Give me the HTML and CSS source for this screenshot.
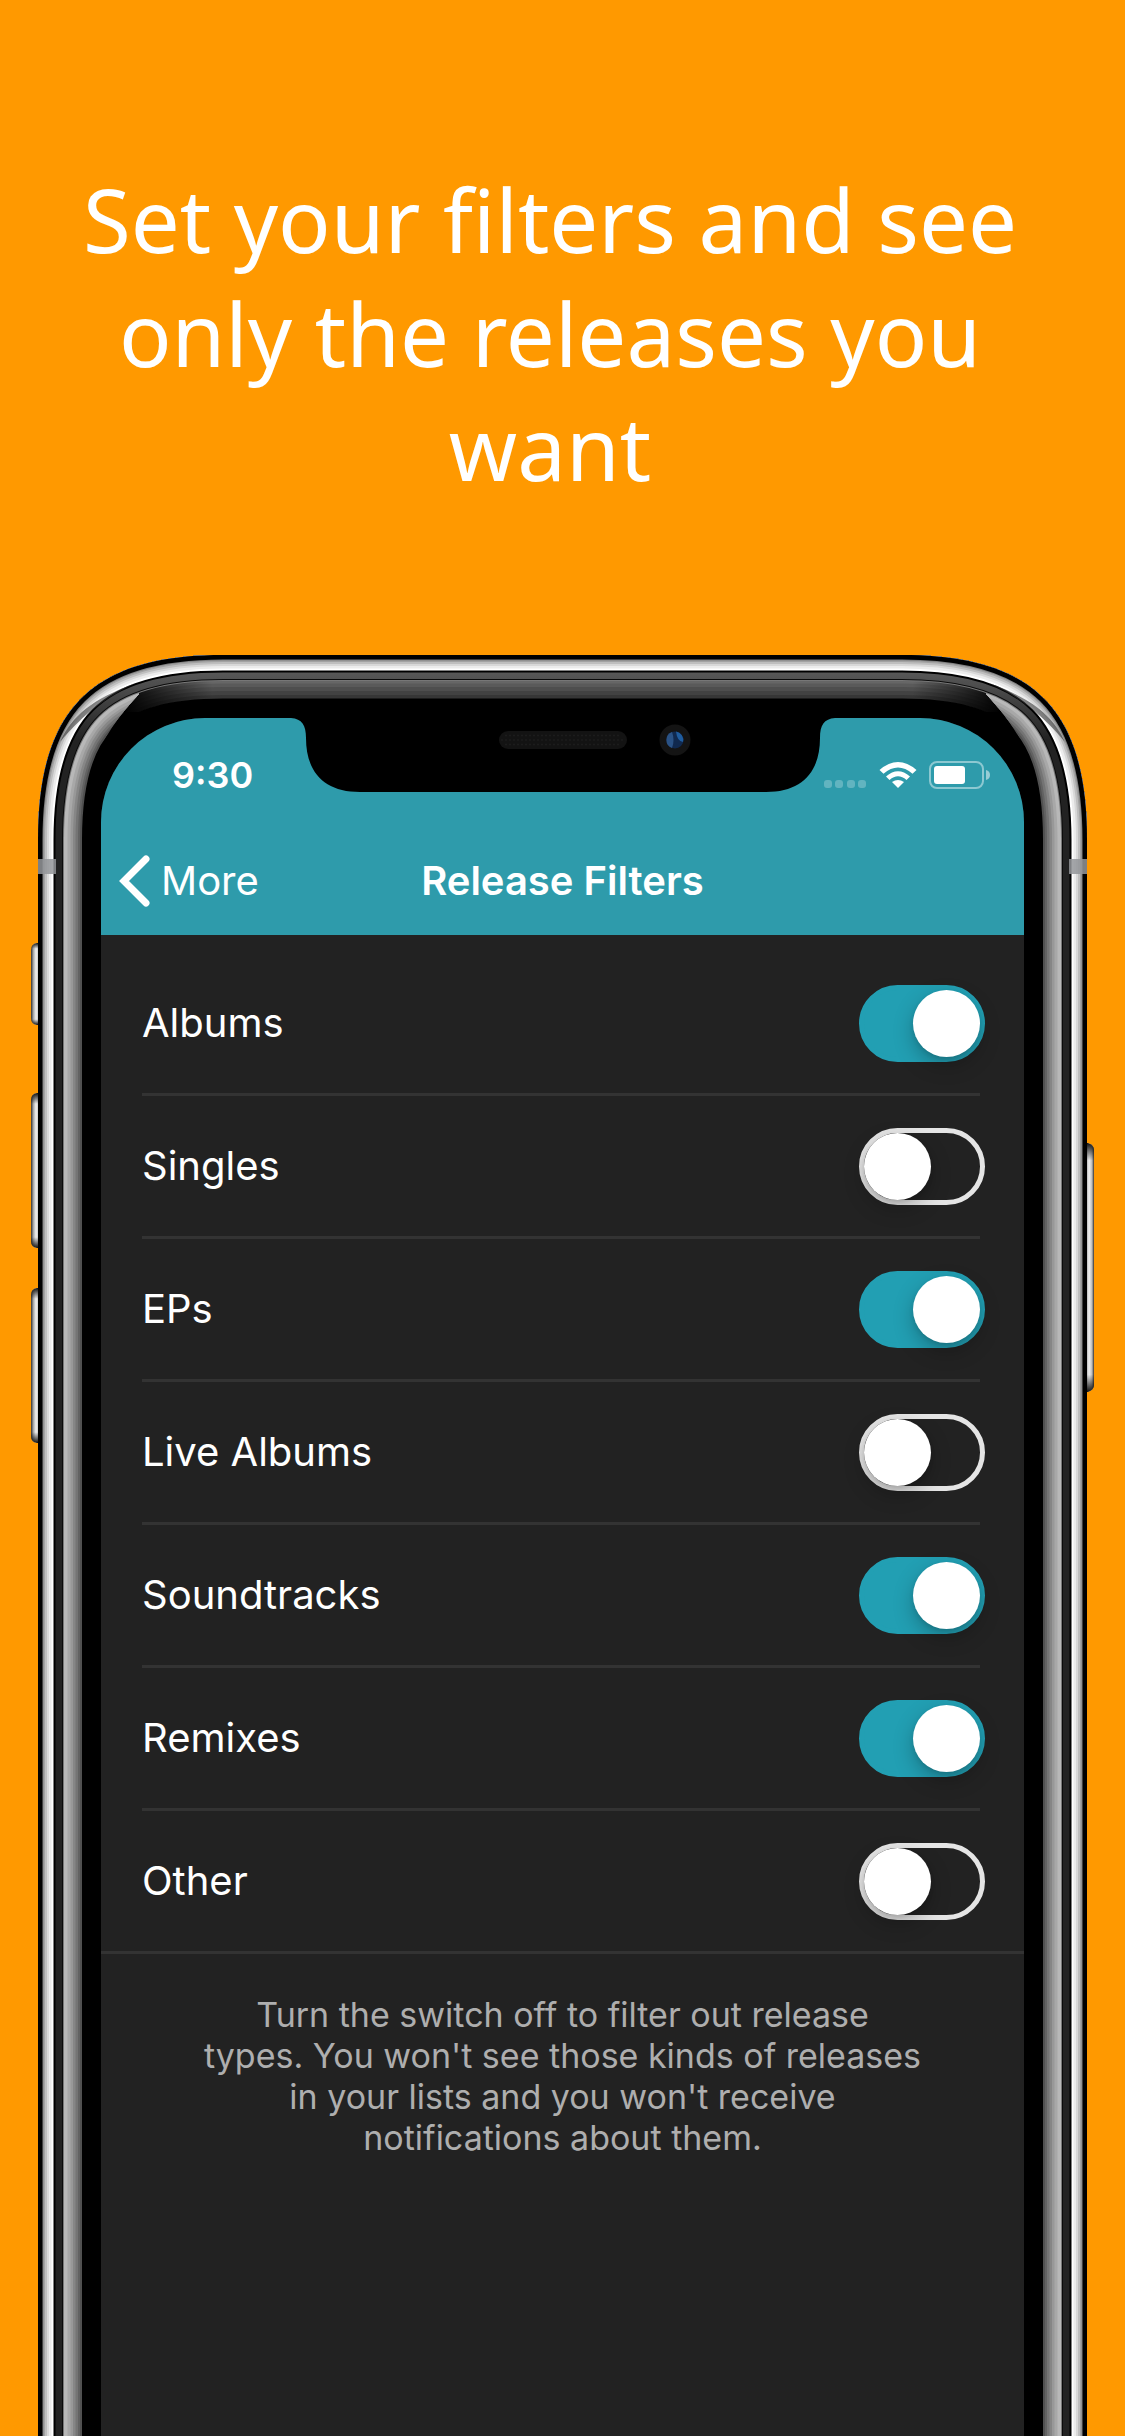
FILE: index.html
```html
<!DOCTYPE html>
<html lang="en">
<head>
<meta charset="utf-8">
<meta name="viewport" content="width=device-width, initial-scale=1">
<title>Release Filters</title>
<link rel="stylesheet" href="styles.css">
</head>
<body>
<main class="promo">
  <h1 class="headline">Set your filters and see only the releases you want</h1>

  <div class="phone">
    <svg class="hardware" viewBox="31 655 1063 2200" preserveAspectRatio="xMidYMin slice" aria-hidden="true">
      <defs>
        <path id="body" d="M38 2900V840C38 709 92 655 223 655H902C1033 655 1087 709 1087 840V2900Z"/>
        <clipPath id="body-clip"><use href="#body"/></clipPath>
        <clipPath id="glare-clip">
          <path d="M30 2900V660H125L139 694C104 732 83 765 83 850V2900Z"/>
          <path d="M1095 2900V660H1000L986 694C1021 732 1042 765 1042 850V2900Z"/>
        </clipPath>
        <linearGradient id="lip" gradientUnits="userSpaceOnUse" x1="0" y1="672" x2="0" y2="740">
          <stop offset="0" stop-color="#585858"/><stop offset="1" stop-color="#222"/>
        </linearGradient>
        <linearGradient id="fade" gradientUnits="userSpaceOnUse" x1="125" y1="0" x2="1000" y2="0">
          <stop offset="0" stop-color="#000"/><stop offset=".1" stop-color="#000" stop-opacity="0"/>
          <stop offset=".9" stop-color="#000" stop-opacity="0"/><stop offset="1" stop-color="#000"/>
        </linearGradient>
        <linearGradient id="key" x1="0" x2="1" y1="0" y2="0">
          <stop offset="0" stop-color="#333"/><stop offset=".25" stop-color="#aaa"/>
          <stop offset=".5" stop-color="#f2f2f2"/><stop offset=".8" stop-color="#bbb"/>
          <stop offset="1" stop-color="#333"/>
        </linearGradient>
        <linearGradient id="key-ends" x1="0" x2="0" y1="0" y2="1">
          <stop offset="0" stop-color="#111"/><stop offset=".07" stop-color="#111" stop-opacity="0"/>
          <stop offset=".93" stop-color="#111" stop-opacity="0"/><stop offset="1" stop-color="#111"/>
        </linearGradient>
      </defs>

      <!-- side keys -->
      <g fill="url(#key)">
        <path d="M41 943h-4q-6 1-6 7v68q0 6 6 7h4z"/>
        <path d="M41 1093h-4q-6 1-6 7v141q0 6 6 7h4z"/>
        <path d="M41 1288h-4q-6 1-6 7v141q0 6 6 7h4z"/>
        <path d="M1084 1143h4q6 2 6 7v235q0 5-6 7h-4z"/>
      </g>
      <g fill="url(#key-ends)">
        <path d="M41 943h-4q-6 1-6 7v68q0 6 6 7h4z"/>
        <path d="M41 1093h-4q-6 1-6 7v141q0 6 6 7h4z"/>
        <path d="M41 1288h-4q-6 1-6 7v141q0 6 6 7h4z"/>
        <path d="M1084 1143h4q6 2 6 7v235q0 5-6 7h-4z"/>
      </g>

      <!-- concentric rings, inner to outer: each stroke is twice its inset -->
      <use href="#body" fill="#000"/>
      <g clip-path="url(#body-clip)" fill="none">
        <g>
          <use href="#body" stroke="#363636" stroke-width="87"/>
          <use href="#body" stroke="#424242" stroke-width="80"/>
          <use href="#body" stroke="#4e4e4e" stroke-width="72"/>
          <use href="#body" stroke="#5a5a5a" stroke-width="64"/>
          <use href="#body" stroke="#666" stroke-width="57"/>
          <use href="#body" stroke="url(#fade)" stroke-width="88"/>
        </g>
        <path fill="#000" d="M30 2900V712H1095V2900Z"/>
        <g clip-path="url(#glare-clip)">
          <use href="#body" stroke="#505050" stroke-width="88"/>
          <use href="#body" stroke="#626262" stroke-width="84"/>
          <use href="#body" stroke="#747474" stroke-width="80"/>
          <use href="#body" stroke="#868686" stroke-width="75"/>
          <use href="#body" stroke="#989898" stroke-width="70"/>
          <use href="#body" stroke="#a8a8a8" stroke-width="65"/>
          <use href="#body" stroke="#b8b8b8" stroke-width="59"/>
        </g>
        <use href="#body" stroke="#777" stroke-width="52"/>
        <use href="#body" stroke="#0a0a0a" stroke-width="50"/>
        <use href="#body" stroke="url(#lip)" stroke-width="48"/>
        <use href="#body" stroke="#000" stroke-width="35"/>
        <use href="#body" stroke="#fff" stroke-width="31"/>
        <use href="#body" stroke="#ececec" stroke-width="27"/>
        <use href="#body" stroke="#d8d8d8" stroke-width="22"/>
        <use href="#body" stroke="#bebebe" stroke-width="18"/>
        <use href="#body" stroke="#a2a2a2" stroke-width="14"/>
        <use href="#body" stroke="#808080" stroke-width="11"/>
        <path fill="#333" fill-opacity=".6" d="M60 742C72 716 92 699 136 683C108 696 84 713 60 742Z"/>
        <path fill="#333" fill-opacity=".6" d="M1065 742C1053 716 1033 699 989 683C1017 696 1041 713 1065 742Z"/>
        <use href="#body" stroke="#000" stroke-width="9"/>
      </g>
      <path fill="#94969a" fill-opacity=".85" d="M38 859h18v15H38zM1069 859h18v15h-18z"/>
    </svg>

    <section class="screen">
      <header class="bar">
        <div class="status">
          <span class="time">9:30</span>
          <svg class="notch" viewBox="0 0 544 74" aria-hidden="true">
            <path d="M0 0C11 1 15 7 15 20C15 54 33 74 69 74H475C511 74 529 54 529 20C529 7 533 1 544 0Z"/>
            <rect x="208" y="13" width="128" height="18" rx="9" fill="#131313"/>
            <path d="M214 17.500H330M210 22H334M214 26.500H330" stroke="#1c1c1c" stroke-width="1.500" stroke-dasharray="2 2"/>
            <circle cx="384" cy="22" r="15.500" fill="#141414"/>
            <circle cx="384" cy="22" r="8.500" fill="#10294f"/>
            <path d="M381 14A8.500 8.500 0 0 0 381 30Q384 22 381 14Z" fill="#2a5285"/>
            <path d="M385 13.500A8.500 8.500 0 0 1 392 24Q386 23 385 13.500Z" fill="#1f5c9e"/>
          </svg>
          <svg class="indicators" viewBox="0 0 168 28" aria-hidden="true">
            <g fill="#fff">
              <g fill-opacity=".25">
                <rect x="1" y="19" width="8" height="8" rx="3"/><rect x="12" y="19" width="8" height="8" rx="3"/>
                <rect x="24" y="19" width="8" height="8" rx="3"/><rect x="35" y="19" width="8" height="8" rx="3"/>
              </g>
              <path d="M75 27L69 21Q75 17 81 21Z"/>
              <path d="M63 15.500Q75 5 87 15.500L83.500 19Q75 11.500 66.500 19Z"/>
              <path d="M56.500 9Q75-7 93.500 9L89.500 12.800Q75 0 60.500 12.800Z"/>
              <rect x="111" y="5" width="31" height="18" rx="3"/>
              <path fill-opacity=".5" d="M163 9q4 1 4 5t-4 5z"/>
            </g>
            <rect x="107" y="1" width="53" height="26" rx="7" fill="none" stroke="#fff" stroke-opacity=".45" stroke-width="2"/>
          </svg>
        </div>
        <nav class="nav">
          <button class="back" type="button">
            <svg class="chevron" viewBox="0 0 32 54" aria-hidden="true"><path d="M27 5L5 27L27 49" fill="none" stroke="#fff" stroke-width="7" stroke-linecap="round" stroke-linejoin="miter"/></svg>
            More
          </button>
          <h2 class="title">Release Filters</h2>
        </nav>
      </header>

      <div class="filters">
        <label class="row"><span>Albums</span><input class="switch" type="checkbox" role="switch" checked></label>
        <label class="row"><span>Singles</span><input class="switch" type="checkbox" role="switch"></label>
        <label class="row"><span>EPs</span><input class="switch" type="checkbox" role="switch" checked></label>
        <label class="row"><span>Live Albums</span><input class="switch" type="checkbox" role="switch"></label>
        <label class="row"><span>Soundtracks</span><input class="switch" type="checkbox" role="switch" checked></label>
        <label class="row"><span>Remixes</span><input class="switch" type="checkbox" role="switch" checked></label>
        <label class="row"><span>Other</span><input class="switch" type="checkbox" role="switch"></label>
      </div>
      <p class="hint">Turn the switch off to filter out release types. You won't see those kinds of releases in your lists and you won't receive notifications about them.</p>
    </section>
  </div>
</main>
</body>
</html>
```

FILE: styles.css
```css
* {
  box-sizing: border-box;
}

body {
  margin: 0;
  background: #ff9900;
  color: #fff;
  font-family: Inter, "Liberation Sans", sans-serif;
}

.promo {
  display: flex;
  flex-direction: column;
  min-height: 100vh;
}

.headline {
  margin: 0;
  padding: 162px 74px 151px 49px;
  font: 400 87px/114px "Noto Sans", "Open Sans", sans-serif;
  text-align: center;
}

.phone {
  position: relative;
  display: flex;
  flex: 1;
  width: 100%;
  max-width: 1063px;
  margin: 0 auto;
  padding: 63px 70px 0;
  overflow: hidden;
}

.hardware {
  position: absolute;
  top: 0;
  left: 0;
  width: 100%;
}

.screen {
  position: relative;
  flex: 1;
  border-radius: 104px 104px 0 0;
  background: #222;
  overflow: hidden;
}

.bar {
  height: 217px;
  background: #2e9bab;
}

.status {
  display: grid;
  grid-template-columns: minmax(0, 1fr) 544px minmax(0, 1fr);
  height: 110px;
}

.time {
  padding: 35px 0 0 71px;
  font-size: 36px;
  font-weight: 600;
  line-height: 44px;
}

.notch {
  width: 544px;
  height: 74px;
}

.indicators {
  justify-self: end;
  width: 168px;
  height: 28px;
  margin: 43px 33px 0 0;
}

.nav {
  display: grid;
  grid-template-columns: 1fr auto 1fr;
  align-items: center;
  height: 107px;
  padding: 0 18px 2px;
}

.back {
  display: flex;
  align-items: center;
  gap: 10px;
  padding: 0;
  border: 0;
  background: none;
  color: inherit;
  font: 400 40px/54px Inter, "Liberation Sans", sans-serif;
}

.chevron {
  width: 32px;
  height: 54px;
}

.title {
  margin: 0;
  font-size: 40px;
  font-weight: 600;
  line-height: 54px;
}

.filters {
  padding-top: 18px;
  border-bottom: 3px solid #333;
}

.row {
  display: flex;
  align-items: center;
  justify-content: space-between;
  height: 143px;
  margin: 0 44px 0 41px;
  border-bottom: 3px solid #333;
  font-size: 40px;
  line-height: 50px;
}

.row:last-child {
  height: 140px;
  border-bottom: 0;
}

.switch {
  appearance: none;
  flex: none;
  width: 126px;
  height: 77px;
  margin: 0 -5px 0 0;
  border: 5px solid #e5e5e5;
  border-radius: 39px;
}

.switch::before {
  content: "";
  display: block;
  width: 67px;
  height: 67px;
  border-radius: 50%;
  background: #fff;
  box-shadow: 0 8px 20px rgba(0, 0, 0, .25), 0 2px 4px rgba(0, 0, 0, .1);
}

.switch:checked {
  border-color: #229fb3;
  background: #229fb3;
}

.switch:checked::before {
  margin-left: auto;
}

.hint {
  margin: 0 auto;
  padding: 40px 0;
  max-width: 720px;
  color: #aeaeae;
  font-size: 34px;
  line-height: 41px;
  text-align: center;
}
```
